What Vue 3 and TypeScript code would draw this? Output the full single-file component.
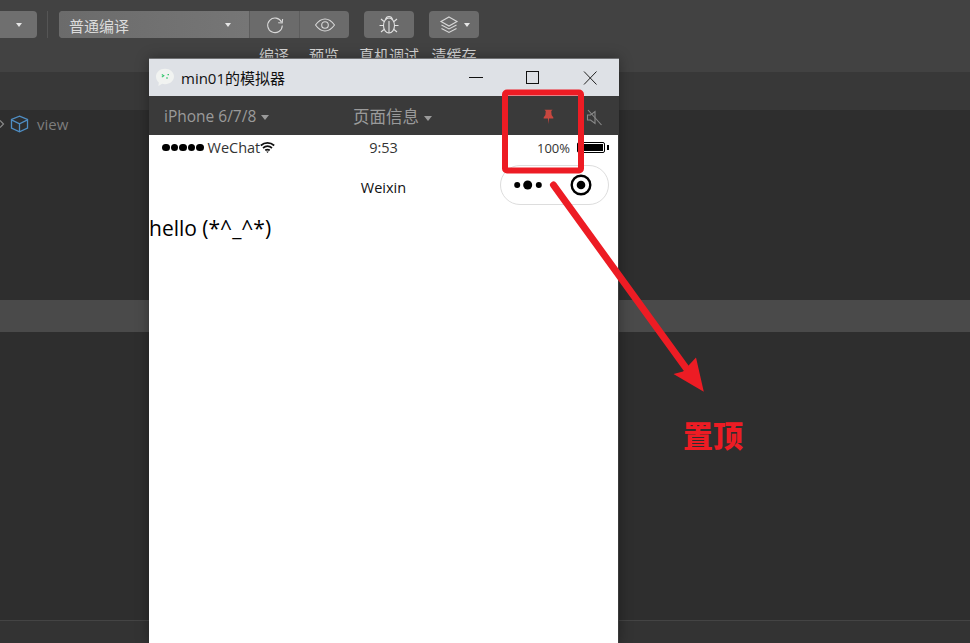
<script setup lang="ts">
// dots of the signal indicator in the status bar
const signalDots: number[] = [1, 2, 3, 4, 5]
</script>

<template>
  <div class="ide">
    <header class="toolbar">
      <div class="tool">
        <div class="btn mode-btn"><i class="caret"></i></div>
      </div>
      <span class="divider"></span>
      <div class="tool compile">
        <div class="btn compile-group">
          <div class="compile-select">
            <span class="compile-name">普通编译</span>
            <i class="caret"></i>
          </div>
          <div class="seg">
            <svg width="20" height="20" viewBox="0 0 20 20" fill="none" stroke="#d8d8d8" stroke-width="1.1">
              <path d="M16.6 7.2A7.3 7.3 0 1 0 17.3 10.5" />
              <path d="M13.2 7.8l4 .2.4-4" />
            </svg>
          </div>
          <div class="seg">
            <svg width="22" height="16" viewBox="0 0 22 16" fill="none" stroke="#d8d8d8" stroke-width="1.1">
              <path d="M1.5 8C4.5 3.8 7.5 2 11 2s6.500 1.800 9.500 6c-3 4.200-6 6-9.500 6s-6.500-1.800-9.500-6z" />
              <circle cx="11" cy="8" r="3.300" />
            </svg>
          </div>
        </div>
        <div class="compile-labels">
          <span>编译</span>
          <span>预览</span>
        </div>
      </div>
      <div class="tool square">
        <div class="btn">
          <svg width="22" height="20" viewBox="0 0 22 20" fill="none" stroke="#e2e2e2" stroke-width="1.1">
            <path d="M5.500 10.500C5.500 6 8 3 11 3s5.500 3 5.500 7.500-2.500 7.500-5.500 7.500-5.500-3-5.500-7.500z" />
            <path d="M7.500 4.500C8 2.500 9.300 1.500 11 1.500s3 1 3.500 3" />
            <path d="M11 6v12" />
            <path d="M6 6.500L3 4M16 6.500L19 4M5.500 10.500H1.500M16.500 10.500h4M6 14.500l-3 2.500M16 14.500l3 2.500" />
          </svg>
        </div>
        <span class="tool-label">真机调试</span>
      </div>
      <div class="tool square last">
        <div class="btn cache-btn">
          <svg width="20" height="20" viewBox="0 0 20 20" fill="none" stroke="#d8d8d8" stroke-width="1.1">
            <path d="M10 2l8 4.500-8 4.500-8-4.500z" />
            <path d="M2.500 10l7.500 4 7.500-4" />
            <path d="M2.500 13.500l7.500 4 7.500-4" />
          </svg>
          <i class="caret"></i>
        </div>
        <span class="tool-label">清缓存</span>
      </div>
    </header>

    <div class="tabbar"></div>

    <main class="tree">
      <div class="tree-row">
        <svg class="chevron" width="5" height="8" viewBox="0 0 5 8" fill="none" stroke="#8a8a8a" stroke-width="1.200">
          <path d="M0 .5L3.500 4 0 7.500" />
        </svg>
        <svg width="19" height="18" viewBox="0 0 19 18" fill="none" stroke="#4f8ec4" stroke-width="1.300">
          <path d="M9.500 1.200l8 3.300v8.500l-8 3.800-8-3.800V4.500z" />
          <path d="M1.500 4.800l8 4 8-4M9.500 8.800V16.500" />
        </svg>
        <span>view</span>
      </div>
      <div class="tree-selected"></div>
    </main>

    <footer class="statusbar"></footer>

    <section class="sim-window">
      <div class="sim-title">
        <svg class="sim-logo" width="20" height="19" viewBox="0 0 20 19">
          <path d="M10 .8c5 0 9 3.400 9 7.700s-4 7.700-9 7.700c-1 0-2-.1-2.900-.4L3.400 18l.4-3.500C2 13 1 10.900 1 8.500 1 4.200 5 .8 10 .8z" fill="#f1f3f1" />
          <path d="M6.800 6.500l2 1.300-2 1.300" fill="none" stroke="#35c76e" stroke-width="1.100" />
          <path d="M12.500 6.700h1.500M11 10h2" stroke="#35c76e" stroke-width="1.200" />
        </svg>
        <span class="sim-name">min01的模拟器</span>
        <div class="sim-controls">
          <svg width="14" height="14" viewBox="0 0 14 14" stroke="#111" fill="none"><path d="M0 6.500h14" /></svg>
          <svg width="14" height="14" viewBox="0 0 14 14" stroke="#111" fill="none"><rect x=".5" y=".5" width="12" height="12" /></svg>
          <svg width="14" height="14" viewBox="0 0 14 14" stroke="#222" fill="none"><path d="M1 .5l12.500 13M13.500 .5L1 13.500" /></svg>
        </div>
      </div>

      <div class="device-bar">
        <span class="device-name">iPhone 6/7/8<i class="caret small"></i></span>
        <span class="page-info">页面信息<i class="caret small"></i></span>
        <div class="device-icons">
          <svg width="11" height="16" viewBox="0 0 12 16" fill="#c8473f">
            <path d="M1.500 0h9L9 1.500l.4 4.300 1.900 2.700v1H6.600L6 15.500 5.400 9.500H.7v-1l1.900-2.700L3 1.500z" />
          </svg>
          <svg width="17" height="17" viewBox="0 0 17 17" fill="none" stroke="#8a8a8a" stroke-width="1.100">
            <path d="M1.500 6v5h3l4.500 3.500V2.500L4.500 6z" />
            <path d="M2 1l13.500 15" />
          </svg>
        </div>
      </div>

      <div class="phone">
        <div class="status-row">
          <div class="status-left">
            <span class="signal"><i v-for="dot in signalDots" :key="dot"></i></span>
            <span>WeChat</span>
            <svg class="wifi" width="15" height="11" viewBox="0 0 15 11" fill="none" stroke="#111" stroke-width="1.700">
              <path d="M.8 3.500c4-3.400 9.400-3.400 13.400 0M3 6c2.800-2.200 6.200-2.200 9 0M5.200 8.300c1.400-.9 3.200-.9 4.600 0" />
              <path d="M6.200 9.500h2.600L7.500 11z" fill="#111" stroke="none" />
            </svg>
          </div>
          <span>9:53</span>
          <div class="status-right">
            <span>100%</span>
            <span class="battery"><i></i></span>
          </div>
        </div>

        <div class="nav-row">
          <span></span>
          <span class="nav-title">Weixin</span>
          <div class="capsule">
            <svg width="28" height="10" viewBox="0 0 28 10" fill="#000">
              <circle cx="3.200" cy="5" r="3" />
              <circle cx="13.700" cy="5" r="4.500" />
              <circle cx="24.800" cy="5" r="3" />
            </svg>
            <svg width="22" height="22" viewBox="0 0 22 22">
              <circle cx="11" cy="11" r="9.300" fill="none" stroke="#000" stroke-width="2.400" />
              <circle cx="11" cy="11" r="4.300" fill="#000" />
            </svg>
          </div>
        </div>

        <p class="hello">hello (*^_^*)</p>
      </div>
    </section>

    <!-- red annotation drawn on top of the screenshot -->
    <svg class="markup" width="970" height="643" viewBox="0 0 970 643" fill="none">
      <rect x="505" y="92.500" width="76" height="78" rx="2" stroke="#ed1c24" stroke-width="6" />
      <path d="M553.500 185L686 368" stroke="#ed1c24" stroke-width="7" stroke-linecap="round" />
      <path d="M703.800 391.800L673.500 374 683 371.500 696 357.500z" fill="#ed1c24" />
    </svg>
    <span class="markup-label">置顶</span>
  </div>
</template>

<style scoped>
.ide {
  position: relative;
  width: 970px;
  height: 643px;
  overflow: hidden;
  display: flex;
  flex-direction: column;
  background: #2e2e2e;
  font-family: "Open Sans", "Noto Sans CJK SC", sans-serif;
}

.toolbar {
  height: 72px;
  box-sizing: border-box;
  padding-top: 11px;
  display: flex;
  align-items: flex-start;
  background: #424242;
  color: #d6d6d6;
  font-size: 15px;
  flex-shrink: 0;
}

.tool {
  display: flex;
  flex-direction: column;
  align-items: center;
  white-space: nowrap;
}

.tool.square {
  width: 50px;
}

.tool.square .btn {
  width: 50px;
}

.tool.last {
  margin-left: 15px;
}

.tool-label {
  margin-top: 7px;
  line-height: 20px;
}

.btn {
  height: 27px;
  box-sizing: border-box;
  background: #6b6b6b;
  border-radius: 4px;
  display: flex;
  align-items: center;
  justify-content: center;
}

.caret {
  display: inline-block;
  width: 0;
  height: 0;
  border-left: 3px solid transparent;
  border-right: 3px solid transparent;
  border-top: 4px solid #e6e6e6;
}

.caret.small {
  margin-left: 5px;
  border-left-width: 4px;
  border-right-width: 4px;
  border-top: 5px solid #9a9a9a;
  vertical-align: 2px;
}

.mode-btn {
  width: 37px;
  border-radius: 0 4px 4px 0;
  background: #6f6f6f;
}

.divider {
  width: 1px;
  height: 27px;
  margin: 0 11px 0 10px;
  background: #555;
}

.compile {
  align-items: stretch;
  margin-right: 15px;
}

.compile-group {
  width: 290px;
  justify-content: flex-start;
  overflow: hidden;
}

.compile-select {
  width: 190px;
  height: 100%;
  box-sizing: border-box;
  padding: 0 18px 0 10px;
  display: flex;
  align-items: center;
  justify-content: space-between;
  background: linear-gradient(90deg, #6b6b6b, #767676);
  color: #dcdcdc;
}

.compile-name {
  padding-top: 2px;
}

.seg {
  width: 50px;
  height: 100%;
  box-sizing: border-box;
  border-left: 1px solid #5d5d5d;
  display: flex;
  align-items: center;
  justify-content: center;
}

.compile-labels {
  display: flex;
  justify-content: flex-end;
  gap: 20px;
  padding-right: 10px;
  margin-top: 7px;
  line-height: 20px;
}

.cache-btn {
  gap: 5px;
}

.tabbar {
  height: 38px;
  background: #383838;
  flex-shrink: 0;
}

.tree {
  flex: 1;
  color: #7d7d7d;
  font-size: 15px;
}

.tree-row {
  height: 27px;
  display: flex;
  align-items: center;
  gap: 7px;
}

.chevron {
  margin-right: -2px;
}

.tree-row span {
  margin-left: 1px;
}

.tree-selected {
  height: 32px;
  margin-top: 163px;
  background: #4a4a4a;
}

.statusbar {
  height: 23px;
  box-sizing: border-box;
  border-top: 1px solid #444;
  background: #333;
  flex-shrink: 0;
}

.sim-window {
  position: absolute;
  left: 149px;
  top: 58px;
  width: 470px;
  height: 585px;
  display: flex;
  flex-direction: column;
  box-shadow: 0 0 12px rgba(0, 0, 0, 0.35);
  background: #3a3a3a;
}

.sim-title {
  height: 38px;
  box-sizing: border-box;
  border-top: 1px solid #6f7072;
  padding-left: 6px;
  display: flex;
  align-items: center;
  gap: 6px;
  background: #dee1e6;
  color: #111;
  font-size: 15px;
  flex-shrink: 0;
}

.sim-controls {
  margin-left: auto;
  padding-right: 22px;
  display: flex;
  gap: 43px;
}

.device-bar {
  height: 39px;
  display: flex;
  align-items: center;
  padding-left: 15px;
  color: #9a9a9a;
  flex-shrink: 0;
}

.device-name {
  width: 189px;
  font-size: 15.500px;
}

.page-info {
  font-size: 16.500px;
}

.device-icons {
  margin-left: auto;
  padding: 3px 16px 0 0;
  display: flex;
  align-items: center;
  gap: 32px;
}

.phone {
  flex: 1;
  margin-right: 1px;
  background: #fff;
  color: #333;
  font-size: 14.500px;
}

.status-row {
  height: 28px;
  padding-bottom: 3px;
  box-sizing: border-box;
  display: grid;
  grid-template-columns: 1fr auto 1fr;
  align-items: center;
}

.status-left {
  margin-left: 13px;
  display: flex;
  align-items: center;
  gap: 4px;
}

.wifi {
  margin-left: -4px;
}

.signal {
  display: flex;
  gap: 1px;
}

.signal i {
  width: 7.500px;
  height: 7.500px;
  border-radius: 50%;
  background: #000;
}

.status-right {
  margin-right: 9px;
  display: flex;
  align-items: center;
  justify-content: flex-end;
  gap: 7px;
  font-size: 13px;
}

.battery {
  position: relative;
  width: 28px;
  height: 11px;
  box-sizing: border-box;
  border: 1px solid #000;
  border-radius: 2px;
  padding: 1px;
  margin-right: 4px;
}

.battery i {
  display: block;
  height: 100%;
  background: #000;
}

.battery::after {
  content: "";
  position: absolute;
  right: -5px;
  top: 2px;
  width: 2px;
  height: 5px;
  background: #000;
}

.nav-row {
  height: 44px;
  display: grid;
  grid-template-columns: 1fr auto 1fr;
  align-items: center;
  color: #111;
}

.nav-title {
  margin-top: 4px;
}

.capsule {
  justify-self: end;
  width: 109px;
  height: 40px;
  margin-right: 9px;
  box-sizing: border-box;
  border: 1px solid #ddd;
  border-radius: 20px;
  padding: 0 16px 0 13px;
  display: flex;
  align-items: center;
  justify-content: space-between;
}

.hello {
  margin: 7px 0 0;
  font-size: 21px;
  line-height: 28px;
  color: #000;
}

.markup {
  position: absolute;
  left: 0;
  top: 0;
  pointer-events: none;
}

.markup-label {
  position: absolute;
  left: 683px;
  top: 414px;
  font-size: 30px;
  line-height: 40px;
  font-weight: 900;
  font-family: "Noto Sans CJK SC", sans-serif;
  color: #ed1c24;
}
</style>
